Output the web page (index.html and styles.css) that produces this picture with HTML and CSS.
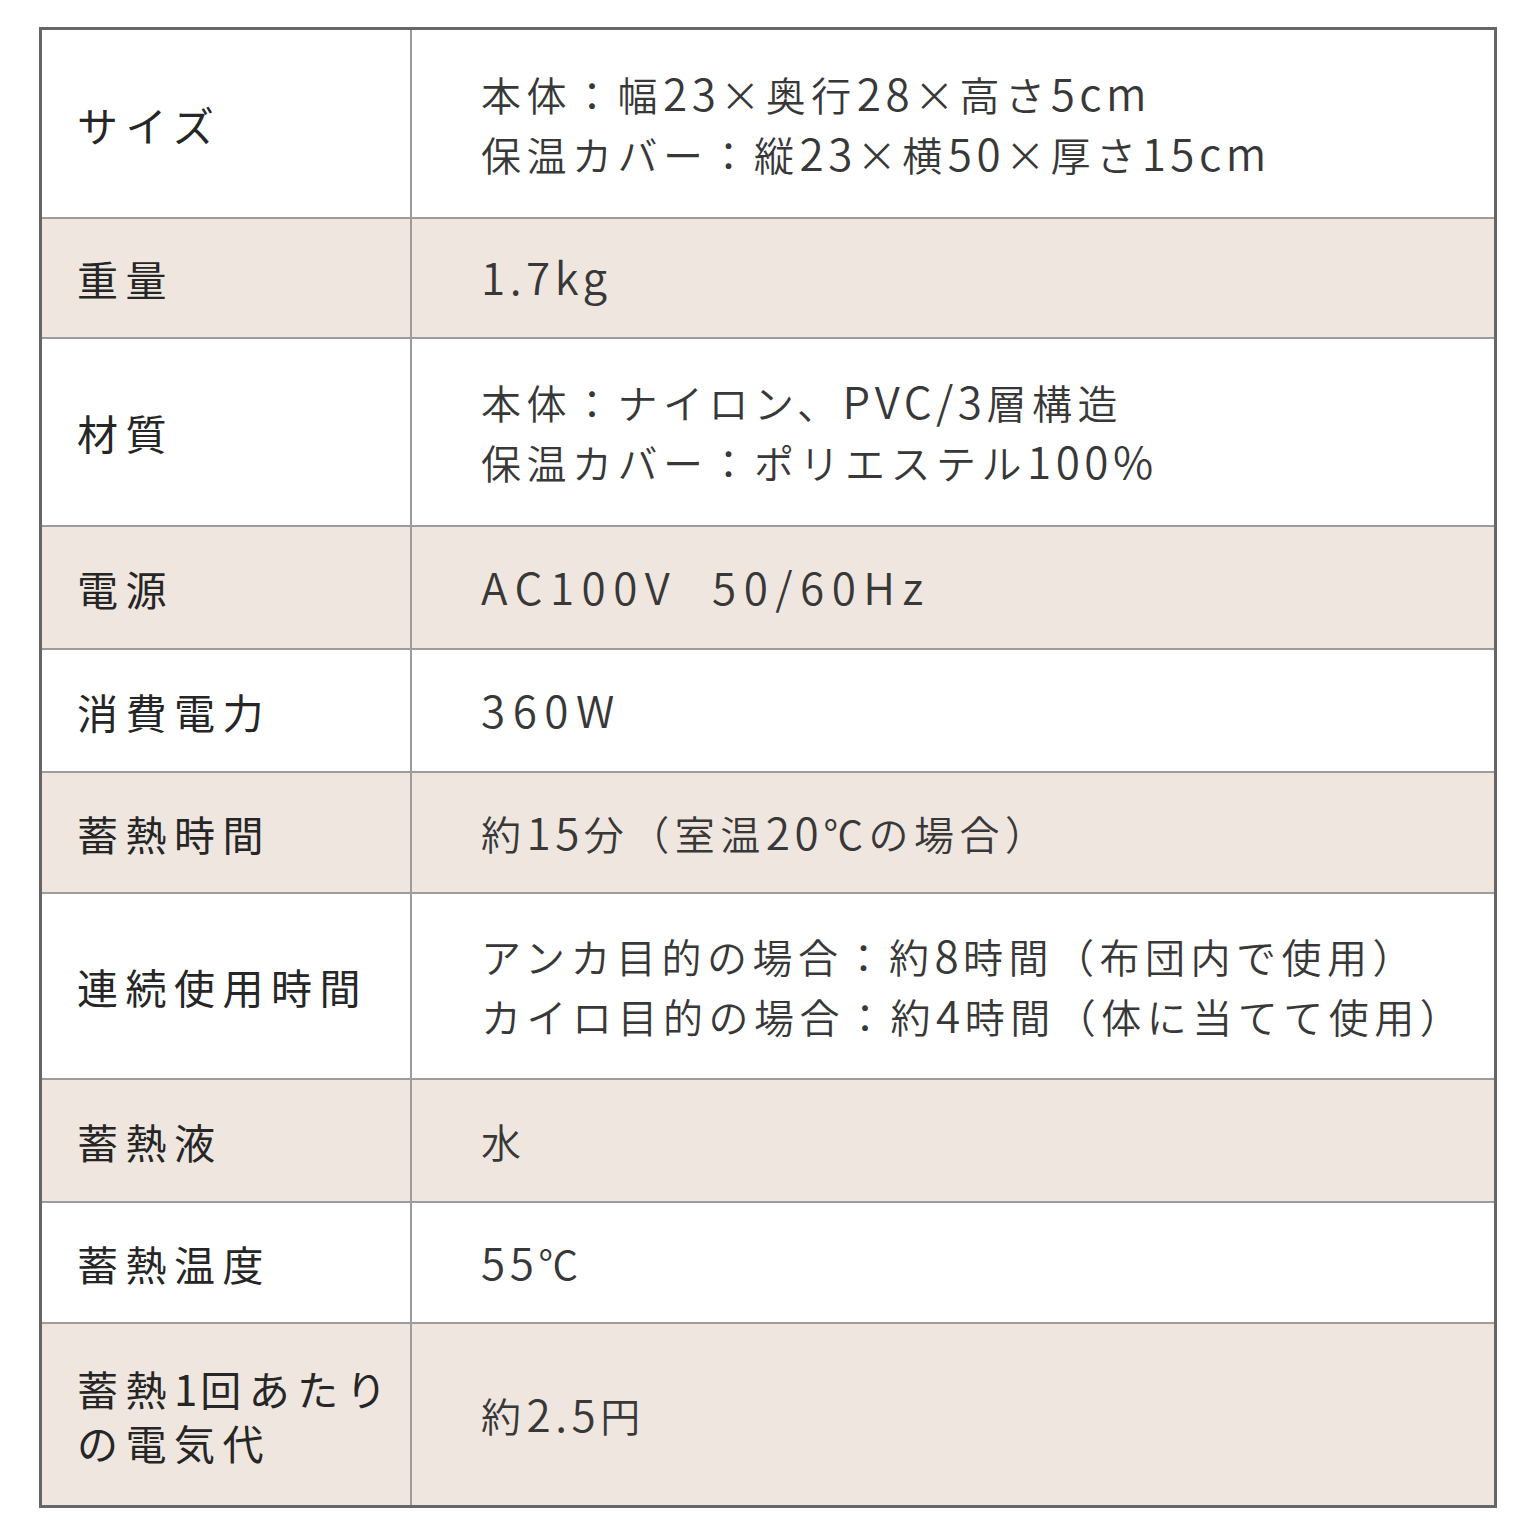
FILE: index.html
```html
<!DOCTYPE html>
<html lang="ja">
<head>
<meta charset="utf-8">
<title>仕様</title>
<link rel="stylesheet" href="styles.css">
</head>
<body>
<div class="spec">
  <div class="row r1">
    <div class="label"><div class="txt">サイズ</div></div>
    <div class="value"><div class="txt">本体：幅<span class="en">23</span>×奥行<span class="en">28</span>×高さ<span class="en">5cm</span><br>保温カバー：縦<span class="en">23</span>×横<span class="en">50</span>×厚さ<span class="en">15cm</span></div></div>
  </div>
  <div class="row alt r2">
    <div class="label"><div class="txt">重量</div></div>
    <div class="value"><div class="txt"><span class="en">1.7kg</span></div></div>
  </div>
  <div class="row r3">
    <div class="label"><div class="txt">材質</div></div>
    <div class="value"><div class="txt">本体：ナイロン、<span class="en">PVC/3</span>層構造<br>保温カバー：ポリエステル<span class="en">100%</span></div></div>
  </div>
  <div class="row alt r4">
    <div class="label"><div class="txt">電源</div></div>
    <div class="value"><div class="txt"><span class="en wide">AC100V&nbsp; 50/60Hz</span></div></div>
  </div>
  <div class="row r5">
    <div class="label"><div class="txt">消費電力</div></div>
    <div class="value"><div class="txt"><span class="en wide">360W</span></div></div>
  </div>
  <div class="row alt r6">
    <div class="label"><div class="txt">蓄熱時間</div></div>
    <div class="value"><div class="txt">約<span class="en">15</span>分（室温<span class="en">20</span>℃の場合）</div></div>
  </div>
  <div class="row r7">
    <div class="label"><div class="txt">連続使用時間</div></div>
    <div class="value"><div class="txt">アンカ目的の場合：約<span class="en">8</span>時間（布団内で使用）<br>カイロ目的の場合：約<span class="en">4</span>時間（体に当てて使用）</div></div>
  </div>
  <div class="row alt r8">
    <div class="label"><div class="txt">蓄熱液</div></div>
    <div class="value"><div class="txt">水</div></div>
  </div>
  <div class="row r9">
    <div class="label"><div class="txt">蓄熱温度</div></div>
    <div class="value"><div class="txt"><span class="en">55</span>℃</div></div>
  </div>
  <div class="row alt r10">
    <div class="label two"><div class="txt">蓄熱<span class="en">1</span>回あたり<br>の電気代</div></div>
    <div class="value"><div class="txt">約<span class="en">2.5</span>円</div></div>
  </div>
</div>
</body>
</html>
```
FILE: styles.css
```css
html, body {
  margin: 0;
  padding: 0;
  background: #ffffff;
}
body {
  padding: 27px 0 0 39px;
  font-family: "Noto Sans CJK JP", "Noto Sans", sans-serif;
}
.spec {
  width: 1458px;
  box-sizing: border-box;
  border: 3px solid #666666;
  display: flex;
  flex-direction: column;
}
.row {
  display: flex;
  border-top: 2px solid #9c9c9c;
  background: #ffffff;
}
.row:first-child {
  border-top: none;
}
.row.alt {
  background: #eee6df;
}
.r1 { height: 187px; }
.r2 { height: 118px; }
.r3 { height: 186px; }
.r4 { height: 121px; }
.r5 { height: 121px; }
.r6 { height: 119px; }
.r7 { height: 184px; }
.r8 { height: 121px; }
.r9 { height: 119px; }
.r10 { height: 181px; }
.label {
  width: 370px;
  flex: none;
  box-sizing: border-box;
  border-right: 2px solid #9c9c9c;
  padding-left: 35px;
  display: flex;
  align-items: center;
  font-size: 41px;
  font-weight: 400;
  letter-spacing: 7.5px;
  color: #262626;
  line-height: 60px;
  white-space: nowrap;
}
.label.two {
  line-height: 54px;
}
.label .en {
  font-size: 42px;
  letter-spacing: 3px;
}
.value {
  flex: 1;
  padding-left: 69px;
  display: flex;
  align-items: center;
  font-size: 40px;
  font-weight: 350;
  letter-spacing: 5.5px;
  color: #383838;
  line-height: 60px;
  white-space: nowrap;
}
.en {
  font-size: 44px;
  letter-spacing: 4.5px;
  line-height: 1;
}
.en.wide {
  letter-spacing: 7.5px;
}
```
